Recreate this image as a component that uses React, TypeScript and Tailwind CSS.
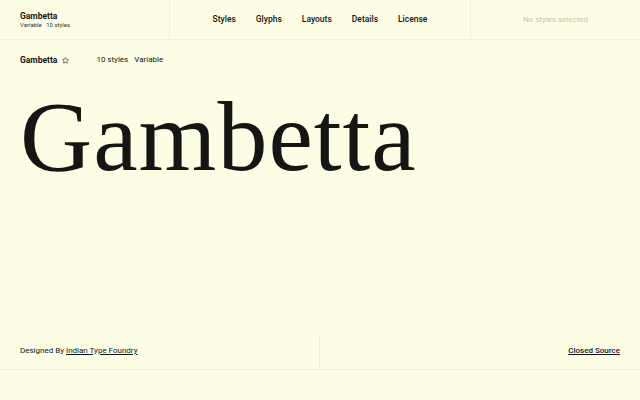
import { Star } from "lucide-react";

export default function App() {
  return (
    <div className="h-[400px] w-full flex flex-col bg-[#fdfde6] text-[#141414] font-['Roboto','Liberation_Sans',sans-serif]">
      {/* top bar */}
      <header className="grid grid-cols-[170px_1fr_170px] h-10 border-b border-[#efeedb]">
        <div className="flex flex-col justify-center pl-5 border-r border-[#efeedb]">
          <span className="text-[8.5px] font-bold leading-[10px]">Gambetta</span>
          <span className="text-[6px] leading-[8px] text-[#333]">Variable&nbsp;&nbsp; 10 styles</span>
        </div>
        <nav className="flex items-center justify-center gap-[20px] text-[8.5px] font-medium">
          <span>Styles</span>
          <span>Glyphs</span>
          <span>Layouts</span>
          <span>Details</span>
          <span>License</span>
        </nav>
        <div className="flex items-center justify-center border-l border-[#efeedb] text-[8px] text-[#c4c3b0]">
          No styles selected
        </div>
      </header>

      {/* info row */}
      <div className="flex items-center h-10 px-5 text-[8px]">
        <span className="font-bold text-[8.5px]">Gambetta</span>
        <Star className="ml-[5px] w-[7px] h-[7px]" strokeWidth={2} />
        <span className="ml-[27px]">10 styles</span>
        <span className="ml-[6px]">Variable</span>
      </div>

      {/* specimen */}
      <h1 className="mt-[7px] px-5 text-[100px] leading-none tracking-[1px] font-['Liberation_Serif',serif] text-[#151512]">
        Gambetta
      </h1>

      {/* footer */}
      <footer className="mt-auto mb-[30px] grid grid-cols-2 h-[37px] border-b border-[#efeedb] text-[8px]">
        <div className="flex items-center pl-5 border-r border-[#efeedb] my-[1px]">
          Designed By&nbsp;<span className="underline underline-offset-1">Indian Type Foundry</span>
        </div>
        <div className="flex items-center justify-end pr-5">
          <span className="underline underline-offset-1 font-medium">Closed Source</span>
        </div>
      </footer>
    </div>
  );
}
